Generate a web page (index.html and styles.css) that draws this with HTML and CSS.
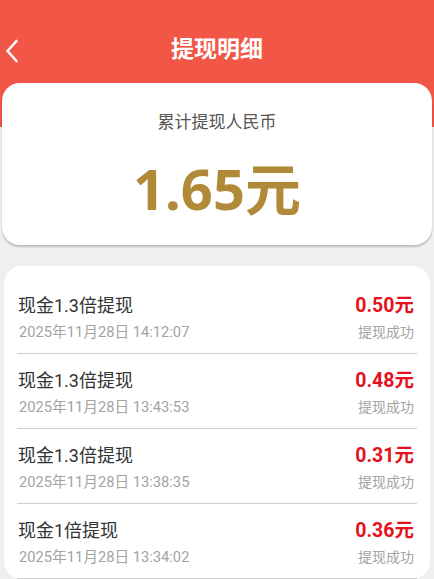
FILE: index.html
```html
<!DOCTYPE html>
<html lang="zh-CN">
<head>
<meta charset="utf-8">
<title>提现明细</title>
<link rel="stylesheet" href="styles.css">
</head>
<body>
<div class="page">
  <header class="topbar">
    <button class="back" aria-label="返回">
      <svg width="14" height="24" viewBox="0 0 14 24"><path d="M11.5 2 L2.5 12 L11.5 22" fill="none" stroke="#fff" stroke-width="2.6" stroke-linecap="round" stroke-linejoin="round"/></svg>
    </button>
    <h1 class="title">提现明细</h1>
  </header>
  <section class="summary">
    <div class="summary-label">累计提现人民币</div>
    <div class="summary-amount">1.65元</div>
  </section>
  <section class="list">
    <div class="row">
      <div class="left">
        <div class="name">现金1.3倍提现</div>
        <div class="time">2025年11月28日 14:12:07</div>
      </div>
      <div class="right">
        <div class="money">0.50元</div>
        <div class="status">提现成功</div>
      </div>
    </div>
    <div class="row">
      <div class="left">
        <div class="name">现金1.3倍提现</div>
        <div class="time">2025年11月28日 13:43:53</div>
      </div>
      <div class="right">
        <div class="money">0.48元</div>
        <div class="status">提现成功</div>
      </div>
    </div>
    <div class="row">
      <div class="left">
        <div class="name">现金1.3倍提现</div>
        <div class="time">2025年11月28日 13:38:35</div>
      </div>
      <div class="right">
        <div class="money">0.31元</div>
        <div class="status">提现成功</div>
      </div>
    </div>
    <div class="row">
      <div class="left">
        <div class="name">现金1倍提现</div>
        <div class="time">2025年11月28日 13:34:02</div>
      </div>
      <div class="right">
        <div class="money">0.36元</div>
        <div class="status">提现成功</div>
      </div>
    </div>
  </section>
</div>
</body>
</html>
```
FILE: styles.css
```css
* { box-sizing: border-box; }
html, body { margin: 0; padding: 0; }
body {
  background: #efefef;
  font-family: Roboto, "Noto Sans CJK SC", sans-serif;
  overflow: hidden;
}
.page {
  min-height: 579px;
  background: linear-gradient(#f25646 0, #f25646 127px, #efefef 127px);
  padding-bottom: 20px;
}
.topbar {
  height: 83px;
  padding-top: 24px;
  display: flex;
  align-items: center;
  justify-content: center;
  position: relative;
}
.back {
  position: absolute;
  left: 4px;
  top: 38px;
  background: none;
  border: 0;
  padding: 0;
  width: 16px;
  height: 26px;
  display: flex;
  align-items: center;
  justify-content: center;
}
.title {
  margin: 0;
  color: #fff;
  font-family: "Noto Sans CJK SC", sans-serif;
  font-size: 23px;
  font-weight: 700;
  line-height: 30px;
  margin-top: -13px;
}
.summary {
  margin: 0 2px;
  height: 162px;
  background: #fff;
  border-radius: 18px;
  box-shadow: 0 2px 2px rgba(0,0,0,0.22);
  display: flex;
  flex-direction: column;
  align-items: center;
  padding-top: 26px;
}
.summary-label {
  font-family: "Noto Sans CJK SC", sans-serif;
  font-size: 17px;
  line-height: 24px;
  color: #555;
}
.summary-amount {
  margin-top: 23px;
  font-family: "Noto Sans", "Noto Sans CJK SC", sans-serif;
  font-size: 56px;
  font-weight: 700;
  line-height: 64px;
  color: #b08a38;
}
.list {
  margin: 21px 4px 0;
  background: #fff;
  border-radius: 18px;
  padding: 13px 13px 0;
}
.row {
  display: flex;
  justify-content: space-between;
  padding: 16px 3px 11px 1px;
  border-bottom: 1px solid #cfcfcf;
}
.left, .right {
  display: flex;
  flex-direction: column;
  gap: 5px;
}
.right { align-items: flex-end; }
.name {
  font-size: 18px;
  line-height: 22px;
  color: #333;
}
.time {
  font-size: 14.7px;
  line-height: 20px;
  color: #a3a3a3;
  padding-left: 1px;
}
.money {
  font-size: 19.5px;
  font-weight: 700;
  line-height: 22px;
  color: #e3121c;
}
.status {
  font-size: 14px;
  line-height: 20px;
  color: #a3a3a3;
}
```
